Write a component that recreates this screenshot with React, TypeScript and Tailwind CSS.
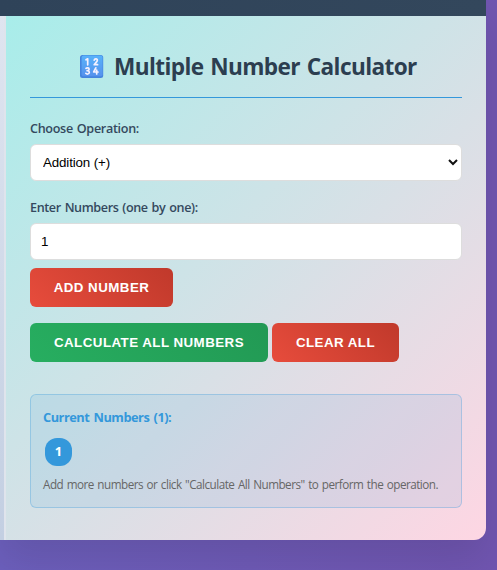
import { useState } from 'react';

const label = "block h-5 whitespace-nowrap text-[12.6px] leading-5 font-semibold text-[#34495e] [word-spacing:1px]";
const button = "h-[39px] rounded-md font-['Liberation_Sans',Arial,sans-serif] text-[13.33px] leading-[15px] font-bold tracking-[0.46px] text-white uppercase whitespace-nowrap";

function KeypadIcon() {
  return (
    <svg viewBox="0 0 24 24" className="size-6 shrink-0">
      <defs>
        <linearGradient id="key" x1="0" y1="0" x2="0" y2="1">
          <stop stopColor="#58b2fa" />
          <stop offset="1" stopColor="#5592ed" />
        </linearGradient>
      </defs>
      <rect x="0" y="0" width="23.2" height="23" rx="2.5" fill="#4485df" />
      <rect x="1.6" y="0.5" width="21" height="20.8" rx="2" fill="url(#key)" />
      <g fill="none" stroke="#f5f1ff" strokeWidth="1.7" strokeLinecap="round" strokeLinejoin="round">
        <path d="M6 4.8 7.7 3.8V9.8" />
        <path d="M14.2 5.2C14.6 3.2 17.7 3.4 17.3 5.5C17 7 15.2 8 14.2 9.7H17.6" />
        <path d="M6 13.4C7 12.4 9.3 12.8 9.1 14.4C9 15.6 7.5 15.7 7.1 15.7C8.2 15.7 9.4 16.2 9.3 17.5C9.1 19.3 6.7 19.4 5.8 18.3" />
        <path d="M15.8 12.8 13.7 17H18M16.7 15V19" />
      </g>
    </svg>
  );
}

export default function App() {
  const [value, setValue] = useState('1');
  return (
    <div className="flex h-[570px] w-[497px] flex-col overflow-hidden bg-linear-to-r from-[#6c5fbc] to-[#7055b0] font-['Open_Sans','Noto_Sans',sans-serif]">
      <div className="flex h-[540px] w-[486px] flex-col overflow-hidden rounded-br-[12px] shadow-[0_20px_40px_rgba(0,0,0,0.1)]">
        <header className="h-4 shrink-0 bg-linear-to-r from-[#2f4359] to-[#33475c]" />
        <div className="flex flex-1">
          <aside className="w-1 shrink-0 bg-linear-to-b from-[#dfe5f0] to-[#c3cfe2]" />
          <div className="w-0.5 shrink-0 bg-[#dfe4ec]" />
          <main className="min-w-0 flex-1 bg-linear-[135deg,#a8edea_0%,#fed6e3_100%] px-6">
            <h1 className="flex h-[82px] items-center gap-[10px] border-b border-[#3498db] pt-[21px] pl-[50px] text-[22.6px] font-bold whitespace-nowrap text-[#2c3e50]">
              <KeypadIcon />
              <span className="tracking-[-0.6px] [word-spacing:1.5px]">Multiple Number Calculator</span>
            </h1>
            <label className={`${label} mt-5 pt-px tracking-[-0.32px]`} htmlFor="operation">Choose Operation:</label>
            <div className="relative mt-[6px]">
              <select id="operation" className="block h-[37px] w-full appearance-none rounded-md border border-[#ddd] bg-white px-3 text-[13.33px] tracking-[-0.13px] text-black font-['Liberation_Sans',Arial,sans-serif]">
                <option>Addition (+)</option>
              </select>
              <svg viewBox="0 0 10 7" className="pointer-events-none absolute top-[15px] right-1 h-[7px] w-[10px]">
                <path d="m1 1 4 4 4-4" fill="none" stroke="#111" strokeWidth="2" />
              </svg>
            </div>
            <label className={`${label} mt-4 pt-px tracking-[-0.39px]`} htmlFor="number">Enter Numbers (one by one):</label>
            <input id="number" value={value} onChange={(event) => setValue(event.target.value)} className="mt-[6px] block h-[37px] w-full rounded-md border border-[#ddd] bg-white px-[10px] text-[13.33px] text-black font-['Liberation_Sans',Arial,sans-serif]" />
            <button className={`${button} mt-2 block w-[143px] bg-linear-[45deg,#e74c3c,#c0392b]`}>Add Number</button>
            <div className="mt-4 flex gap-1">
              <button className={`${button} w-[238px] bg-linear-[45deg,#27ae60,#229954]`}>Calculate All Numbers</button>
              <button className={`${button} w-[127px] bg-linear-[45deg,#e74c3c,#c0392b]`}>Clear All</button>
            </div>
            <section className="mt-8 h-[114px] rounded-md border border-[#3498db]/30 bg-[#3498db]/10 px-3 pt-3">
              <h2 className="h-5 text-[12.8px] leading-5 font-bold tracking-[-0.5px] whitespace-nowrap text-[#3498db] [word-spacing:1.5px]">Current Numbers (1):</h2>
              <span className="mt-[11px] ml-0.5 flex h-7 w-[27px] items-center justify-center rounded-[12px] bg-[#3498db] text-[13px] font-bold text-white">1</span>
              <p className="mt-[9px] text-[11.7px] leading-[19px] tracking-[-0.51px] whitespace-nowrap text-[#666] [word-spacing:1px]">Add more numbers or click "Calculate All Numbers" to perform the operation.</p>
            </section>
          </main>
        </div>
      </div>
    </div>
  );
}
